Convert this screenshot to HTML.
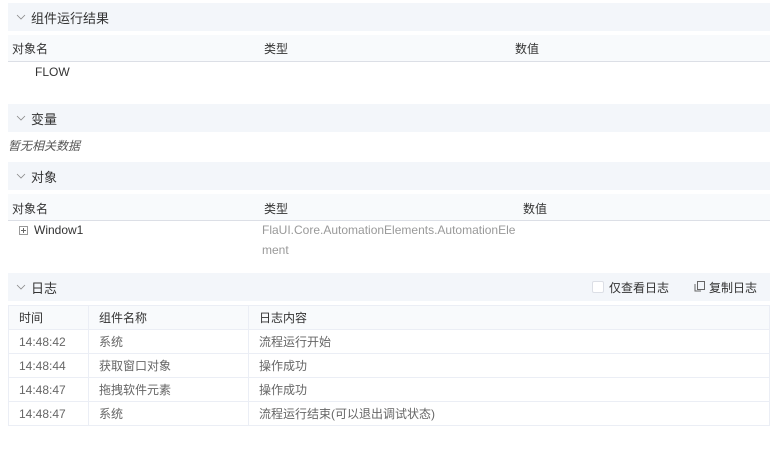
<!DOCTYPE html>
<html><head><meta charset="utf-8"><style>
*{margin:0;padding:0;box-sizing:border-box}
body{width:783px;height:457px;background:#fff;font-family:"Liberation Sans","Noto Sans CJK SC",sans-serif;font-size:12px;color:#333;position:relative;overflow:hidden}
.a{position:absolute;white-space:nowrap}
.hd{position:absolute;left:8px;width:762px;background:#f3f6fa;height:28px}
.hd .t{position:absolute;left:23px;top:5px;font-size:13px;color:#333}
.hd svg.c{position:absolute;left:8px;top:10px}
.th{position:absolute;left:8px;width:762px;background:#f8fafc;border-bottom:1px solid #dcdfe6}
table{position:absolute;left:8px;top:305px;width:762px;border-collapse:collapse}
td{border:1px solid #ebeef5;height:24px;padding-left:10px;color:#666;font-size:12px}
tr:first-child td{background:#f8fafc;color:#333}
</style></head><body>
<div class="hd" style="top:3px"><svg class="c" width="10" height="8"><path d="M1 2l4 4 4-4" stroke="#888" stroke-width=".8" fill="none"/></svg><span class="t">组件运行结果</span></div>
<div class="th" style="top:35px;height:27px"></div>
<span class="a" style="left:12px;top:40px">对象名</span>
<span class="a" style="left:264px;top:40px">类型</span>
<span class="a" style="left:515px;top:40px">数值</span>
<span class="a" style="left:35px;top:65px;color:#333">FLOW</span>

<div class="hd" style="top:104px"><svg class="c" width="10" height="8"><path d="M1 2l4 4 4-4" stroke="#888" stroke-width=".8" fill="none"/></svg><span class="t">变量</span></div>
<span class="a" style="left:8px;top:137px;font-style:italic;color:#555">暂无相关数据</span>

<div class="hd" style="top:162px"><svg class="c" width="10" height="8"><path d="M1 2l4 4 4-4" stroke="#888" stroke-width=".8" fill="none"/></svg><span class="t">对象</span></div>
<div class="th" style="top:194px;height:27px"></div>
<span class="a" style="left:12px;top:200px">对象名</span>
<span class="a" style="left:264px;top:200px">类型</span>
<span class="a" style="left:523px;top:200px">数值</span>
<svg class="a" style="left:19px;top:226px" width="9" height="9"><rect x=".5" y=".5" width="8" height="8" fill="none" stroke="#999"/><path d="M2 4.5h5M4.5 2v5" stroke="#666"/></svg>
<span class="a" style="left:34px;top:223px;color:#333">Window1</span>
<span class="a" style="left:262px;top:223px;color:#999">FlaUI.Core.AutomationElements.AutomationEle</span>
<span class="a" style="left:262px;top:243px;color:#999">ment</span>

<div class="hd" style="top:273px"><svg class="c" width="10" height="8"><path d="M1 2l4 4 4-4" stroke="#888" stroke-width=".8" fill="none"/></svg><span class="t">日志</span>
<span class="a" style="left:584px;top:8px;width:12px;height:12px;border:1px solid #dcdfe6;background:#fff;border-radius:2px"></span>
<span class="a" style="left:601px;top:6px;font-size:12px">仅查看日志</span>
<svg class="a" style="left:686px;top:8px" width="11" height="11"><rect x="3.5" y=".5" width="7" height="8" fill="none" stroke="#666"/><path d="M1 3v7h6" stroke="#666" fill="none"/></svg>
<span class="a" style="left:701px;top:6px;font-size:12px">复制日志</span></div>
<table>
<tr><td style="width:80px">时间</td><td style="width:160px">组件名称</td><td>日志内容</td></tr>
<tr><td>14:48:42</td><td>系统</td><td>流程运行开始</td></tr>
<tr><td>14:48:44</td><td>获取窗口对象</td><td>操作成功</td></tr>
<tr><td>14:48:47</td><td>拖拽软件元素</td><td>操作成功</td></tr>
<tr><td>14:48:47</td><td>系统</td><td>流程运行结束(可以退出调试状态)</td></tr>
</table>
</body></html>
